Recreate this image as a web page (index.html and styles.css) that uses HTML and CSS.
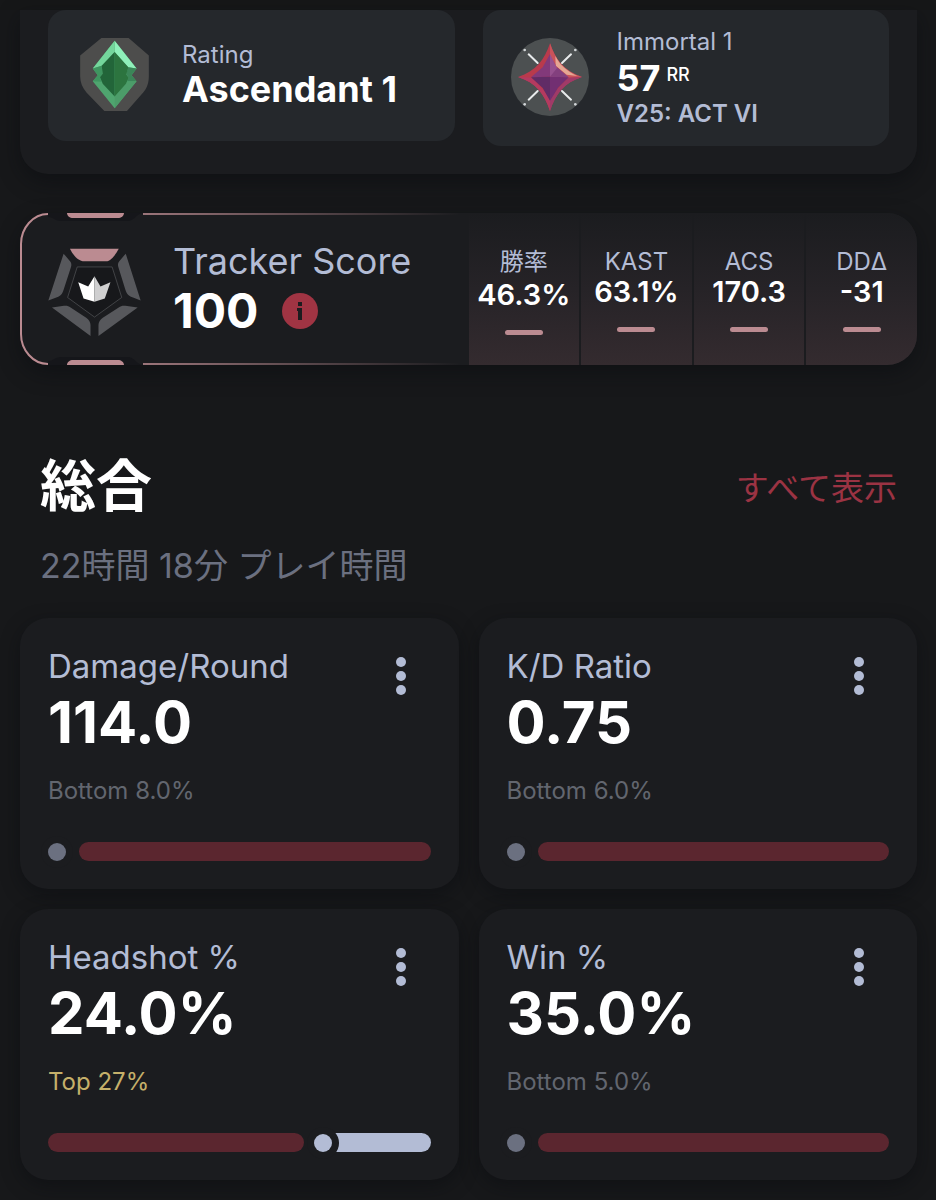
FILE: index.html
```html
<!DOCTYPE html>
<html lang="ja">
<head>
    <meta charset="UTF-8">
    <meta name="viewport" content="width=device-width, initial-scale=1">
    <title>Tracker Score</title>
    <link rel="stylesheet" href="styles.css">
</head>
<body>
    <div class="top-strip"></div>

    <main class="page">
        <section class="rank-panel">
            <div class="rank-card">
                <svg class="rank-icon" width="69" height="73" viewBox="30 38 207 220" aria-hidden="true">
                    <path d="M94 38h82l61 53v62c0 18-5 36-17 49l-49 56h-68l-54-56c-12-14-19-31-19-49V91z" fill="#4d4d4c"/>
                    <path d="M134 46l66 84-15 20 15 18-66 82-66-82 15-18-15-20z" fill="#4fa56f"/>
                    <path d="M134 46l66 84-25-4-41-46z" fill="#8ff0ba"/>
                    <path d="M134 46L68 130l27-8 39-42z" fill="#74d69c"/>
                    <path d="M68 130l27-8 2 24-7 14 5 10-27-2 15-18z" fill="#3f9560"/>
                    <path d="M200 130l-25-4-6 20 7 12-4 10 28 0-15-18z" fill="#3b8558"/>
                    <path d="M134 250l66-82-28 2-38 46z" fill="#4c9c69"/>
                    <path d="M134 80l-39 42 3 24-8 10 8 20 36 38z" fill="#226539"/>
                    <path d="M134 80l41 46-6 22 7 10-8 18-34 38z" fill="#2c743f"/>
                </svg>
                <div class="rank-text">
                    <div class="rank-label">Rating</div>
                    <div class="rank-value">Ascendant 1</div>
                </div>
            </div>

            <div class="rank-card peak">
                <svg class="rank-icon" width="78" height="78" viewBox="30 38 234 234" aria-hidden="true">
                    <circle cx="147" cy="155" r="117" fill="#4c5051"/>
                    <path d="M83 87l27 26M210 87l-27 26M83 223l27-26M210 223l-27-26" stroke="#e8ebec" stroke-width="6" stroke-linecap="round"/>
                    <g fill="#d2d6d8">
                        <circle cx="71" cy="74" r="4"/>
                        <circle cx="223" cy="74" r="4"/>
                        <circle cx="71" cy="237" r="4"/>
                        <circle cx="223" cy="237" r="4"/>
                    </g>
                    <path d="M147 54c16 48 42 84 96 101-54 17-80 52-96 102-16-50-42-85-96-102 54-17 80-53 96-101z" fill="#b93a4c"/>
                    <path d="M147 54c16 48 42 84 96 101l-42 2-54-60z" fill="#c9535a"/>
                    <path d="M163 92c14 28 36 46 66 60l-32-4-33-27z" fill="#e5a793"/>
                    <path d="M147 257c16-50 42-85 96-102l-42 2-54 60z" fill="#a03a68"/>
                    <path d="M147 257c-16-50-42-85-96-102l42 2 54 60z" fill="#b43a60"/>
                    <path d="M147 86l-22 40-35 30 57-2z" fill="#82397a"/>
                    <path d="M147 86l20 40 36 30-56-2z" fill="#96518f"/>
                    <path d="M90 156l57-2v72l-22-38z" fill="#602c66"/>
                    <path d="M203 156l-56-2v72l24-38z" fill="#722f72"/>
                    <path d="M147 154l22-27 34 29z" fill="#83407e"/>
                </svg>
                <div class="rank-text">
                    <div class="rank-label">Immortal 1</div>
                    <div class="rank-value">57<span class="unit">RR</span></div>
                    <div class="rank-act">V25: ACT VI</div>
                </div>
            </div>
        </section>

        <section class="score-card">
            <svg class="score-frame" width="448" height="152" viewBox="0 0 448 152" aria-hidden="true">
                <defs>
                    <linearGradient id="fade" gradientUnits="userSpaceOnUse" x1="123" y1="0" x2="440" y2="0">
                        <stop offset="0" stop-color="#bb8b91" stop-opacity=".8"/>
                        <stop offset="1" stop-color="#bb8b91" stop-opacity="0"/>
                    </linearGradient>
                </defs>
                <path d="M28 0h95c-6 0-8 8-16 8H42c-8 0-8-4-14-4zM28 152h95c-6 0-8-8-16-8H42c-8 0-8 4-14 4z" fill="#15161a"/>
                <path d="M28 1C13 1 1 15 1 31v90c0 16 12 30 27 30" fill="none" stroke="#bb8b91" stroke-width="2"/>
                <path d="M47 0h57c0 3-3 5-6 5H53c-3 0-6-2-6-5zM47 152h57c0-3-3-5-6-5H53c-3 0-6 2-6 5z" fill="#bb8b91"/>
                <path d="M123 0h325v2H123zM123 150h325v2H123z" fill="url(#fade)"/>
            </svg>

            <div class="score-main">
                <svg class="score-icon" width="93" height="88" viewBox="25 38 280 265" aria-hidden="true">
                    <path d="M91 40h147c-9 16-22 38-38 38h-66c-18 0-33-18-43-38z" fill="#bb8b91"/>
                    <g fill="#57585c">
                        <path d="M72 55l20 24c4 6 4 10 2 17L72 164c-4 14-11 20-22 23l-24 9z"/>
                        <path d="M259 55l-20 24c-4 6-4 10-2 17l21 68c4 14 12 20 23 23l23 9z"/>
                        <path d="M37 217l36-5c9-1 14 1 20 5l47 31c8 6 13 13 13 22v33z"/>
                        <path d="M295 217l-37-5c-9-1-14 1-20 5l-48 31c-8 6-13 13-13 22v33z"/>
                    </g>
                    <path d="M113 95h105l29 92-82 59-81-59z" fill="#17181b" stroke="#56575b" stroke-width="2"/>
                    <path d="M165 123l-19 31-30-13 16 49 33 10z" fill="#fff"/>
                    <path d="M165 123l18 31 30-13-17 49-31 10z" fill="#cfcfd0"/>
                </svg>
                <div>
                    <div class="score-label">Tracker Score</div>
                    <div class="score-value">
                        100
                        <button class="info" type="button" aria-label="Info">
                            <svg width="36" height="36" viewBox="0 0 36 36" aria-hidden="true">
                                <circle cx="18" cy="18" r="18" fill="#a03443"/>
                                <path d="M16 9h4v4h-4zM15 15h5v12h-4v-9h-1z" fill="#1b1c1f"/>
                            </svg>
                        </button>
                    </div>
                </div>
            </div>

            <div class="score-stats">
                <div class="score-stat">
                    <div class="stat-name kanji">勝率</div>
                    <div class="stat-number">46.3%</div>
                    <div class="stat-dash"></div>
                </div>
                <div class="score-stat">
                    <div class="stat-name">KAST</div>
                    <div class="stat-number">63.1%</div>
                    <div class="stat-dash"></div>
                </div>
                <div class="score-stat">
                    <div class="stat-name">ACS</div>
                    <div class="stat-number">170.3</div>
                    <div class="stat-dash"></div>
                </div>
                <div class="score-stat">
                    <div class="stat-name">DDΔ</div>
                    <div class="stat-number">-31</div>
                    <div class="stat-dash"></div>
                </div>
            </div>
        </section>

        <header class="section-head">
            <h1>総合</h1>
            <a href="#" class="show-all">すべて表示</a>
        </header>
        <p class="playtime">22時間 18分 プレイ時間</p>

        <section class="grid">
            <article class="card">
                <div class="card-head">
                    <div>
                        <h2>Damage/Round</h2>
                        <div class="value">114.0</div>
                    </div>
                    <button class="menu" type="button" aria-label="Menu"><i></i><i></i><i></i></button>
                </div>
                <div class="percentile">Bottom 8.0%</div>
                <div class="meter low">
                    <span class="dot"></span>
                    <span class="rest"></span>
                </div>
            </article>

            <article class="card">
                <div class="card-head">
                    <div>
                        <h2>K/D Ratio</h2>
                        <div class="value">0.75</div>
                    </div>
                    <button class="menu" type="button" aria-label="Menu"><i></i><i></i><i></i></button>
                </div>
                <div class="percentile">Bottom 6.0%</div>
                <div class="meter low">
                    <span class="dot"></span>
                    <span class="rest"></span>
                </div>
            </article>

            <article class="card">
                <div class="card-head">
                    <div>
                        <h2>Headshot %</h2>
                        <div class="value">24.0%</div>
                    </div>
                    <button class="menu" type="button" aria-label="Menu"><i></i><i></i><i></i></button>
                </div>
                <div class="percentile top">Top 27%</div>
                <div class="meter">
                    <span class="done" style="width: 67%"></span>
                    <span class="dot"></span>
                    <span class="rest"></span>
                </div>
            </article>

            <article class="card">
                <div class="card-head">
                    <div>
                        <h2>Win %</h2>
                        <div class="value">35.0%</div>
                    </div>
                    <button class="menu" type="button" aria-label="Menu"><i></i><i></i><i></i></button>
                </div>
                <div class="percentile">Bottom 5.0%</div>
                <div class="meter low">
                    <span class="dot"></span>
                    <span class="rest"></span>
                </div>
            </article>
        </section>
    </main>
</body>
</html>
```
FILE: styles.css
```css
* {
    box-sizing: border-box;
}

body {
    margin: 0;
    background-color: #17181a;
    color: #fff;
    font-family: Inter, "Noto Sans CJK JP", sans-serif;
    font-optical-sizing: none;
}

h1, h2, p {
    margin: 0;
}

button {
    padding: 0;
    border: none;
    background: none;
    cursor: pointer;
}

.top-strip {
    height: 10px;
    background-color: #161718;
}

.page {
    padding: 0 19px 20px 20px;
}

/* Rank panel */
.rank-panel {
    display: grid;
    grid-template-columns: 1fr 1fr;
    gap: 28px;
    align-items: start;
    padding: 0 28px 28px;
    background-color: #1b1c1f;
    border-radius: 0 0 28px 28px;
    box-shadow: 0 8px 20px rgba(10, 11, 16, 0.5);
}

.rank-card {
    display: flex;
    align-items: center;
    gap: 33px;
    padding: 28px 32px 30px;
    background-color: #25282c;
    border-radius: 18px;
}

.rank-card.peak {
    gap: 28px;
    padding: 16px 28px;
}

.rank-icon, .score-icon {
    display: block;
    flex: none;
}

.rank-text {
    padding-bottom: 4px;
}

.rank-label {
    color: #b3bcd5;
    font-size: 24px;
    line-height: 32px;
}

.rank-value {
    font-size: 36px;
    font-weight: 700;
    line-height: 36px;
}

.peak .rank-text {
    display: grid;
    gap: 2px;
    padding-bottom: 0;
}

.peak .rank-icon {
    align-self: flex-start;
    margin-top: 12px;
}

.unit {
    margin-left: 6px;
    font-size: 18px;
    font-weight: 500;
    vertical-align: 10px;
    line-height: 18px;
}

.rank-act {
    color: #b3bcd5;
    font-size: 24px;
    font-weight: 600;
    line-height: 32px;
}

/* Tracker score */
.score-card {
    position: relative;
    display: grid;
    grid-template-columns: 1fr 1fr;
    min-height: 152px;
    margin-top: 39px;
    background-color: #1b1c1f;
    border-radius: 30px;
    box-shadow: 0 8px 20px rgba(10, 11, 16, 0.5);
}

.score-frame {
    position: absolute;
    top: 0;
    left: 0;
}

.score-main {
    display: flex;
    align-items: center;
    gap: 32px;
    padding-left: 28px;
}

.score-icon {
    margin-top: 5px;
}

.score-label {
    color: #b3bcd5;
    font-size: 36px;
    line-height: 44px;
}

.score-value {
    display: flex;
    align-items: center;
    gap: 24px;
    font-size: 48px;
    font-weight: 700;
    line-height: 56px;
}

.info svg {
    display: block;
}

.score-stats {
    display: grid;
    grid-template-columns: repeat(4, 1fr);
    gap: 2px;
    overflow: hidden;
    border-radius: 0 30px 30px 0;
}

.score-stat {
    display: flex;
    flex-direction: column;
    align-items: center;
    justify-content: center;
    padding-top: 2px;
    background: linear-gradient(#1b1c1f, #262327 50%, #342b2f);
}

.stat-name {
    color: #b3bcd5;
    font-size: 24px;
    line-height: 28px;
}

.stat-name.kanji {
    line-height: 34px;
}

.stat-number {
    font-size: 29px;
    font-weight: 600;
    line-height: 32px;
}

.stat-dash {
    width: 38px;
    height: 5px;
    margin-top: 19px;
    background-color: #bb8b91;
    border-radius: 3px;
}

/* Overview */
.section-head {
    display: flex;
    align-items: center;
    justify-content: space-between;
    margin-top: 89px;
    padding: 0 20px;
}

.section-head h1 {
    font-size: 56px;
    font-weight: 700;
    line-height: 64px;
}

.show-all {
    color: #9b3343;
    font-size: 33px;
    text-decoration: none;
}

.playtime {
    margin: 26px 0 30px;
    padding: 0 20px;
    color: #6b7080;
    font-size: 34px;
    line-height: 44px;
}

.grid {
    display: grid;
    grid-template-columns: 1fr 1fr;
    gap: 20px;
}

.card {
    padding: 28px;
    background-color: #1b1c1f;
    border-radius: 28px;
    box-shadow: 0 6px 18px rgba(10, 11, 16, 0.5);
}

.card-head {
    display: flex;
    justify-content: space-between;
}

.card h2 {
    color: #b3bcd5;
    font-size: 33px;
    font-weight: 400;
    line-height: 40px;
}

.value {
    font-size: 58px;
    font-weight: 700;
    line-height: 72px;
}

.menu {
    display: flex;
    flex-direction: column;
    align-items: center;
    justify-content: center;
    gap: 4px;
    width: 60px;
    height: 60px;
}

.menu i {
    width: 10px;
    height: 10px;
    background-color: #b3bcd5;
    border-radius: 50%;
}

.percentile {
    margin-top: 17px;
    color: #62666f;
    font-size: 24px;
    line-height: 32px;
}

.percentile.top {
    color: #c5b06a;
}

.meter {
    display: flex;
    align-items: center;
    height: 19px;
    margin-top: 35px;
}

.done, .rest {
    height: 19px;
    border-radius: 10px;
}

.done {
    margin-right: 10px;
    background-color: #5b262f;
}

/* the ring around the dot cuts into the bar behind it */
.dot {
    z-index: 1;
    flex: none;
    width: 18px;
    height: 18px;
    background-color: #b3bcd5;
    border-radius: 50%;
    box-shadow: 0 0 0 7px #1b1c1f;
}

.rest {
    flex: 1;
    background-color: #b3bcd5;
    border-radius: 0 10px 10px 0;
}

.low .dot {
    background-color: #6b7080;
}

.low .rest {
    margin-left: 13px;
    background-color: #5b262f;
    border-radius: 10px;
}
```
